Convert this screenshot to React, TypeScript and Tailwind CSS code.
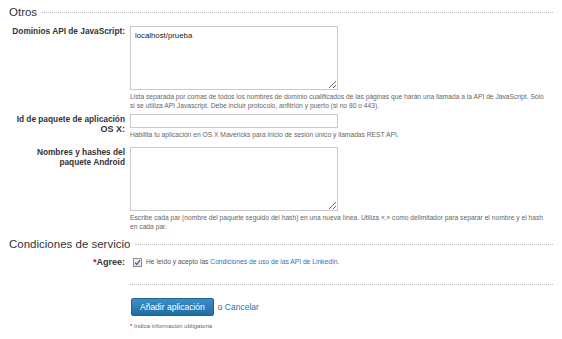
import React, { useState } from "react";

const font = { fontFamily: '"Liberation Sans", Arial, sans-serif' };

function Row({ label, required, children }: { label: React.ReactNode; required?: boolean; children: React.ReactNode }) {
  return (
    <div className="flex">
      <div className="w-[116px] shrink-0 text-right text-[8.3px] leading-[10px] font-bold text-[#333]">
        {required && <span className="text-[#c00]">*</span>}
        {label}
      </div>
      <div className="ml-[5px] flex-1">{children}</div>
    </div>
  );
}

function Help({ children, className = "w-[426px]" }: { children: React.ReactNode; className?: string }) {
  return <p className={"mt-[2px] text-[6.7px] leading-[9px] text-[#666] " + className}>{children}</p>;
}

export default function App() {
  const [domains, setDomains] = useState("localhost/prueba");
  const [bundle, setBundle] = useState("");
  const [android, setAndroid] = useState("");
  const [agree, setAgree] = useState(true);

  return (
    <div className="w-[562px] h-[339px] bg-white px-[9px] pt-[5px] overflow-hidden" style={font}>
      {/* Otros */}
      <div className="flex items-center">
        <h3 className="text-[11.5px] leading-[14px] text-[#333]">Otros</h3>
        <div className="ml-[5px] flex-1 border-t border-dotted border-[#bbb]" />
      </div>

      <div className="mt-[7px]">
        <Row label="Dominios API de JavaScript:">
          <textarea
            value={domains}
            onChange={(e) => setDomains(e.target.value)}
            className="block w-[208px] h-[64px] border border-[#c9c9c9] px-[4px] py-[4px] text-[7.8px] leading-[10px] text-[#222] outline-none"
          />
          <Help className="w-[414px]">
            Lista separada por comas de todos los nombres de dominio cualificados de las páginas que harán una llamada a la API de JavaScript. Sólo si se utiliza API Javascript. Debe incluir protocolo, anfitrión y puerto (si no 80 o 443).
          </Help>
        </Row>
      </div>

      <div className="mt-[4px]">
        <Row
          label={
            <>
              Id de paquete de aplicación
              <br />
              <span className="text-[9px]">OS X:</span>
            </>
          }
        >
          <input
            value={bundle}
            onChange={(e) => setBundle(e.target.value)}
            className="block w-[208px] h-[14px] border border-[#c9c9c9] px-[3px] text-[7.8px] outline-none"
          />
          <Help>Habilita tu aplicación en OS X Mavericks para inicio de sesión único y llamadas REST API.</Help>
        </Row>
      </div>

      <div className="mt-[8px]">
        <Row
          label={
            <>
              Nombres y hashes del
              <br />
              paquete Android
            </>
          }
        >
          <textarea
            value={android}
            onChange={(e) => setAndroid(e.target.value)}
            className="block w-[208px] h-[64px] border border-[#c9c9c9] px-[4px] py-[4px] text-[7.8px] outline-none"
          />
          <Help className="w-[422px]">
            Escribe cada par (nombre del paquete seguido del hash) en una nueva línea. Utiliza «,» como delimitador para separar el nombre y el hash en cada par.
          </Help>
        </Row>
      </div>

      {/* Condiciones de servicio */}
      <div className="mt-[6px] flex items-center">
        <h3 className="text-[11.5px] leading-[14px] text-[#333]">Condiciones de servicio</h3>
        <div className="ml-[5px] flex-1 border-t border-dotted border-[#bbb]" />
      </div>

      <div className="mt-[6px]">
        <Row label={<span className="text-[9px]">Agree:</span>} required>
          <label className="flex items-center gap-[4px] cursor-pointer">
            <button
              type="button"
              onClick={() => setAgree(!agree)}
              className="ml-[3px] w-[9px] h-[9px] border border-[#8e8f8f] bg-gradient-to-b from-[#f4f4f4] to-[#dcdcdc] flex items-center justify-center"
            >
              {agree && (
                <svg viewBox="0 0 10 10" className="w-[7px] h-[7px]">
                  <path d="M1.5 5.2 L4 7.8 L8.6 1.6" fill="none" stroke="#2b4f8a" strokeWidth="1.6" />
                </svg>
              )}
            </button>
            <span className="text-[6.7px] text-[#555]">
              He leído y acepto las <a href="#" className="text-[#1f73b7]">Condiciones de uso de las API de LinkedIn</a>.
            </span>
          </label>
        </Row>
      </div>

      <div className="mt-[17px] ml-[121px] border-t border-dotted border-[#bbb]" />

      <div className="mt-[13px] ml-[122px] flex items-center">
        <button className="h-[18px] px-[8px] rounded-[2px] border border-[#1a6593] bg-gradient-to-b from-[#3d8fc6] to-[#1e6ea5] text-white text-[8.5px]">
          Añadir aplicación
        </button>
        <span className="ml-[4px] text-[8.5px] text-[#555]">
          o <a href="#" className="text-[#1f73b7]">Cancelar</a>
        </span>
      </div>

      <p className="mt-[6px] ml-[121px] text-[6px] text-[#666]">
        <span className="text-[#c00]">*</span> Indica información obligatoria
      </p>
    </div>
  );
}
